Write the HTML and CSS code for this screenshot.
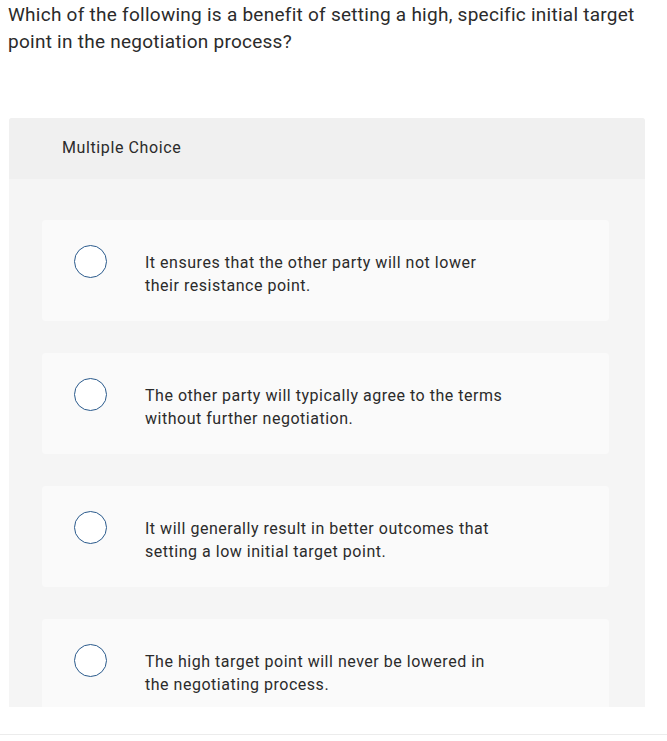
FILE: index.html
```html
<!DOCTYPE html>
<html>
<head>
<meta charset="utf-8">
<link rel="stylesheet" href="styles.css">
</head>
<body>
<div class="page">
  <p class="question">Which of the following is a benefit of setting a high, specific initial target point in the negotiation process?</p>
  <div class="panel">
    <div class="panel-head">Multiple Choice</div>
    <div class="panel-body">
      <div class="option">
        <span class="radio"></span>
        <span class="label">It ensures that the other party will not lower<br>their resistance point.</span>
      </div>
      <div class="option">
        <span class="radio"></span>
        <span class="label">The other party will typically agree to the terms<br>without further negotiation.</span>
      </div>
      <div class="option">
        <span class="radio"></span>
        <span class="label">It will generally result in better outcomes that<br>setting a low initial target point.</span>
      </div>
      <div class="option">
        <span class="radio"></span>
        <span class="label">The high target point will never be lowered in<br>the negotiating process.</span>
      </div>
    </div>
  </div>
  <div class="rule"></div>
</div>
</body>
</html>
```
FILE: styles.css
```css
html, body {
  margin: 0;
  padding: 0;
  background: #fff;
}
body {
  font-family: Roboto, "Liberation Sans", sans-serif;
  color: #2b2b2b;
  overflow: hidden;
  height: 741px;
}
.page {
  padding: 0 0 0 8px;
}
.question {
  margin: 0;
  padding-top: 1px;
  font-size: 19px;
  line-height: 27px;
  letter-spacing: 0.26px;
  width: 650px;
}
.panel {
  margin-top: 63px;
  width: 636px;
  margin-left: 1px;
  height: 589px;
  overflow: hidden;
  border-radius: 3px 3px 0 0;
  background: #f5f5f5;
}
.panel-head {
  background: #f0f0f0;
  height: 61px;
  box-sizing: border-box;
  padding: 20px 0 0 53px;
  font-size: 16px;
  line-height: 20px;
  letter-spacing: 0.6px;
}
.panel-body {
  padding: 41px 36px 0 33px;
  display: flex;
  flex-direction: column;
  gap: 32px;
}
.option {
  background: #fafafa;
  border-radius: 4px;
  height: 101px;
  box-sizing: border-box;
  padding: 29px 0 0 32px;
  display: flex;
  align-items: flex-start;
}
.radio {
  flex: none;
  width: 31px;
  height: 31px;
  border: 1.8px solid #2a5a8c;
  border-radius: 50%;
  background: #fff;
  margin-top: -4px;
}
.label {
  margin-left: 38px;
  padding-top: 2px;
  font-size: 16px;
  line-height: 23px;
  letter-spacing: 0.52px;
}
.rule {
  margin: 27px 0 0 -8px;
  height: 1px;
  background: #ececec;
}
```
